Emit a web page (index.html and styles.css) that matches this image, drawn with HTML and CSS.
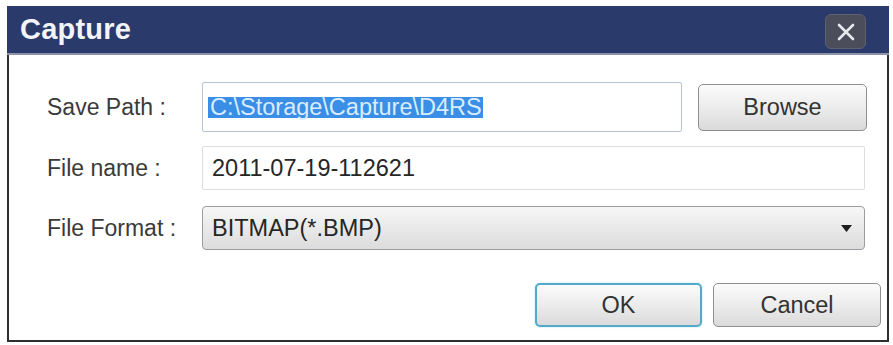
FILE: index.html
```html
<!DOCTYPE html>
<html>
<head>
<meta charset="utf-8">
<link rel="stylesheet" href="styles.css">
</head>
<body>
<div class="dialog">
  <div class="titlebar">
    <span class="title">Capture</span>
    <button class="close" aria-label="Close">
      <svg width="18" height="18" viewBox="0 0 18 18"><path d="M2 2 L16 16 M16 2 L2 16" stroke="#e6e8ee" stroke-width="2.6" stroke-linecap="round"/></svg>
    </button>
  </div>
  <div class="content">
    <div class="row row-path">
      <label class="label">Save Path :</label>
      <div class="input focused"><span class="sel">C:\Storage\Capture\D4RS</span></div>
      <button class="btn browse">Browse</button>
    </div>
    <div class="row row-name">
      <label class="label">File name :</label>
      <div class="input wide">2011-07-19-112621</div>
    </div>
    <div class="row row-format">
      <label class="label">File Format :</label>
      <div class="select">
        <span>BITMAP(*.BMP)</span>
        <svg class="arrow" width="11" height="7" viewBox="0 0 11 7"><path d="M0 0 H11 L5.5 7 Z" fill="#1e1e1e"/></svg>
      </div>
    </div>
    <div class="actions">
      <button class="btn ok">OK</button>
      <button class="btn cancel">Cancel</button>
    </div>
  </div>
</div>
</body>
</html>
```
FILE: styles.css
```css
* { box-sizing: border-box; }
html, body { margin: 0; padding: 0; background: #ffffff; }
body {
  width: 893px;
  height: 345px;
  font-family: "Liberation Sans", Arial, sans-serif;
  padding: 6px 0 0 7px;
}
.dialog {
  width: 882px;
  height: 336px;
  border: 2px solid #2e2e2e;
  border-top: none;
  background: #ffffff;
  display: flex;
  flex-direction: column;
}
.titlebar {
  height: 49px;
  background: #2a3a6b;
  border-bottom: 2px solid #8a93a8;
  display: flex;
  align-items: center;
  justify-content: space-between;
  padding: 0 23px 0 13px;
  margin: 0 -2px;
}
.title {
  color: #f2f4f8;
  font-weight: bold;
  font-size: 29px;
  letter-spacing: 0.2px;
  margin-top: -1px;
}
.close {
  width: 41px;
  height: 35px;
  margin-top: 4px;
  border-radius: 6px;
  background: #4b4e5a;
  border: 1px solid #5e6270;
  display: flex;
  align-items: center;
  justify-content: center;
  padding: 0;
}
.content {
  flex: 1;
  padding: 27px 0 0 38px;
  display: flex;
  flex-direction: column;
}
.row {
  display: flex;
  align-items: center;
}
.label {
  width: 155px;
  font-size: 23px;
  color: #3a3a3a;
  flex: none;
}
.input {
  height: 50px;
  width: 480px;
  border: 1px solid #c5ccd3;
  border-radius: 2px;
  display: flex;
  align-items: center;
  padding-left: 8px;
  font-size: 23.5px;
  color: #262626;
}
.input.focused { border-color: #b4c4d2; padding-left: 5px; }
.sel {
  background: #3a8ee6;
  color: #d9ecff;
  padding: 0 1px 0 2px;
  line-height: 21px;
}
.input.wide {
  width: 663px;
  height: 44px;
  border-color: #dedede;
  padding-left: 9px;
}
.row-name { margin-top: 14px; }
.row-format { margin-top: 16px; }
.select {
  width: 663px;
  height: 44px;
  border: 1px solid #999da2;
  border-radius: 4px;
  background: linear-gradient(#f7f7f7, #e9e9e9 50%, #dcdcdc);
  display: flex;
  align-items: center;
  justify-content: space-between;
  padding: 0 12px 0 9px;
  font-size: 23.5px;
  color: #262626;
}
.arrow { margin-top: 1px; }
.btn {
  font-family: "Liberation Sans", Arial, sans-serif;
  font-size: 23.5px;
  color: #333333;
  border: 1px solid #8d8f93;
  border-radius: 5px;
  background: linear-gradient(#fbfbfb, #ececec 50%, #dadada);
  padding: 0;
}
.browse {
  width: 169px;
  height: 47px;
  margin-left: 16px;
}
.actions {
  display: flex;
  justify-content: flex-end;
  gap: 11px;
  margin-top: 33px;
  padding-right: 6px;
}
.ok {
  width: 167px;
  height: 44px;
  border: 2px solid #52a9c9;
  box-shadow: 0 0 2px #9fe0f0;
}
.cancel {
  width: 168px;
  height: 44px;
}
```
